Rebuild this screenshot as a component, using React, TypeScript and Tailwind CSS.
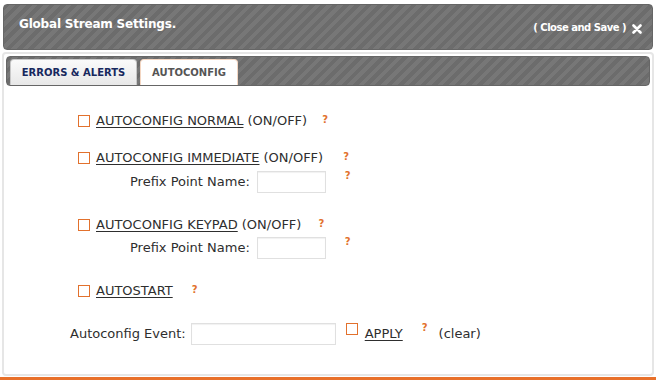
import React from "react"

const stripes =
  "bg-[repeating-linear-gradient(135deg,#6c6c6c_0px,#6c6c6c_4px,#777777_4px,#777777_8px)]"

function Help({ className = "" }: { className?: string }) {
  return (
    <span className={`text-[10px] font-bold leading-none text-[#e2712d] ${className}`}>?</span>
  )
}

function Check({ className = "" }: { className?: string }) {
  return (
    <span
      className={`inline-block h-[12px] w-[12px] shrink-0 border-[1.5px] border-[#e2712d] bg-white ${className}`}
    />
  )
}

function TextBox({ width }: { width: string }) {
  return (
    <input
      type="text"
      className={`h-[22px] ${width} border border-[#e0e0e0] bg-white shadow-[inset_0_1px_1px_rgba(0,0,0,0.06)] outline-none`}
    />
  )
}

export default function App() {
  return (
    <div className="relative h-[380px] w-[656px] overflow-hidden bg-white font-['DejaVu_Sans',sans-serif] text-[13px] text-[#2e2e2e]">
      {/* header */}
      <div
        className={`mx-[3px] mt-[4px] flex h-[46px] items-start justify-between rounded-[4px] border border-[#666] ${stripes} pl-[15px] pr-[10px]`}
      >
        <div className="mt-[10px] text-[12px] font-bold tracking-[-0.2px] text-white">Global Stream Settings.</div>
        <div className="mt-[15px] flex items-center gap-[6px] text-[10px] font-bold tracking-[-0.5px] text-white">
          <span>( Close and Save )</span>
          <svg width="10" height="10" viewBox="0 0 10 10" className="mt-[3px]">
            <path d="M1.5 1.5 L8.5 8.5 M8.5 1.5 L1.5 8.5" stroke="white" strokeWidth="2.6" strokeLinecap="round" />
          </svg>
        </div>
      </div>

      {/* panel */}
      <div className="mx-[2px] mt-[2px] h-[324px] rounded-[4px] border-2 border-[#e6e6e6] p-[2px]">
        <div className={`flex h-[30px] items-end gap-[3px] rounded-[4px] border border-[#666] ${stripes} pl-[3px]`}>
          <div className="flex h-[26px] w-[127px] items-center justify-center rounded-t-[4px] border border-b-0 border-[#c8c8c8] bg-[linear-gradient(#fafafa,#e8e8e8)] text-[10px] font-bold text-[#17285e]">
            ERRORS &amp; ALERTS
          </div>
          <div className="flex h-[26px] w-[98px] items-center justify-center rounded-t-[4px] border border-b-0 border-[#f3d6c2] bg-white text-[10px] font-bold text-[#555]">
            AUTOCONFIG
          </div>
        </div>

        <div className="flex flex-col pt-[24px]">
          {/* normal */}
          <div className="flex h-[22px] items-center pl-[72px]">
            <Check />
            <span className="ml-[6px] underline underline-offset-2">AUTOCONFIG NORMAL</span>
            <span className="ml-[4px]">(ON/OFF)</span>
            <Help className="ml-[15px] -mt-[3px]" />
          </div>

          {/* immediate */}
          <div className="mt-[15px] flex h-[22px] items-center pl-[72px]">
            <Check />
            <span className="ml-[6px] underline underline-offset-2">AUTOCONFIG IMMEDIATE</span>
            <span className="ml-[4px]">(ON/OFF)</span>
            <Help className="ml-[20px] -mt-[3px]" />
          </div>
          <div className="mt-[2px] flex h-[22px] items-center pl-[124px]">
            <span>Prefix Point Name:</span>
            <span className="ml-[7px]">
              <TextBox width="w-[69px]" />
            </span>
            <Help className="ml-[19px] -mt-[12px]" />
          </div>

          {/* keypad */}
          <div className="mt-[21px] flex h-[22px] items-center pl-[72px]">
            <Check />
            <span className="ml-[6px] underline underline-offset-2">AUTOCONFIG KEYPAD</span>
            <span className="ml-[4px]">(ON/OFF)</span>
            <Help className="ml-[17px] -mt-[3px]" />
          </div>
          <div className="mt-[1px] flex h-[22px] items-center pl-[124px]">
            <span>Prefix Point Name:</span>
            <span className="ml-[7px]">
              <TextBox width="w-[69px]" />
            </span>
            <Help className="ml-[19px] -mt-[12px]" />
          </div>

          {/* autostart */}
          <div className="mt-[21px] flex h-[22px] items-center pl-[72px]">
            <Check />
            <span className="ml-[6px] underline underline-offset-2">AUTOSTART</span>
            <Help className="ml-[19px] -mt-[3px]" />
          </div>

          {/* event */}
          <div className="mt-[21px] flex h-[22px] items-center pl-[64px]">
            <span>Autoconfig Event:</span>
            <span className="ml-[5px]">
              <TextBox width="w-[145px]" />
            </span>
            <Check className="ml-[10px] self-start" />
            <span className="ml-[7px] underline underline-offset-2">APPLY</span>
            <Help className="ml-[19px] -mt-[12px]" />
            <span className="ml-[11px]">(clear)</span>
          </div>
        </div>
      </div>

      <div className="mt-[1px] h-[3px] bg-[#e8702a]" />
    </div>
  )
}
